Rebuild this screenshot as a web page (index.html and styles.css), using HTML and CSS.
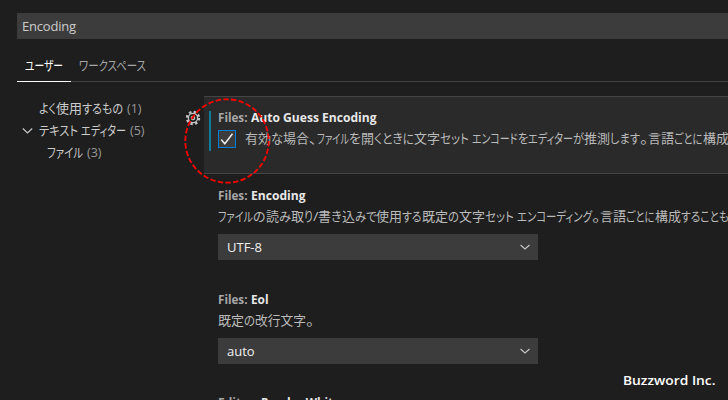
FILE: index.html
```
<!DOCTYPE html>
<html lang="ja">
<head>
<meta charset="utf-8">
<title>Settings</title>
<link rel="stylesheet" href="styles.css">
</head>
<body>
<div class="search">Encoding</div>
<div class="tabs">
  <div class="tab active"><span data-w="38">ユーザー</span></div>
  <div class="tab"><span data-w="67">ワークスペース</span></div>
</div>
<div class="main">
  <nav class="tree">
    <div class="node"><span data-w="17">よく</span><span data-w="26">使用</span><span data-w="41">するもの</span><span class="count" data-w="14.5">(1)</span></div>
    <div class="node"><svg class="twisty" width="12" height="8" viewBox="0 0 12 8"><path d="M.8 1.5L5.5 6L10.2 1.5"/></svg><span data-w="42">テキスト </span><span data-w="45">エディター</span><span class="count" data-w="14.5">(5)</span></div>
    <div class="node child"><span data-w="36">ファイル</span><span class="count" data-w="14.5">(3)</span></div>
  </nav>
  <div class="settings">
    <section class="setting focused">
      <svg class="gear" width="16" height="16" viewBox="0 0 16 16"><circle class="teeth" cx="8" cy="8" r="6"/><circle class="rim" cx="8" cy="8" r="4.6"/><circle class="hub" cx="8" cy="8" r="1.7"/></svg>
      <div class="bar"></div>
      <h3><span class="cat" data-w="32.5">Files: </span><span data-w="125.5">Auto Guess Encoding</span></h3>
      <div class="checkrow">
        <div class="check"><svg width="16" height="16" viewBox="0 0 16 16"><path d="M2.2 8.5L5.8 12.7L13.5 2.8"/></svg></div>
        <p><span data-w="26">有効</span><span data-w="12">な</span><span data-w="26">場合</span><span data-w="8">、</span><span data-w="32">ファイル</span><span data-w="12">を</span><span data-w="13">開</span><span data-w="40">くときに</span><span data-w="26">文字</span><span data-w="32">セット </span><span data-w="45.5">エンコード</span><span data-w="10.5">を</span><span data-w="45">エディター</span><span data-w="11">が</span><span data-w="26">推測</span><span data-w="30">します</span><span class="stop" data-w="8">。</span><span data-w="26">言語</span><span data-w="28.5">ごとに</span><span data-w="26">構成</span></p>
      </div>
      <svg class="ring" width="88" height="88" viewBox="0 0 88 88"><circle cx="44" cy="44" r="41.7"/></svg>
    </section>
    <section class="setting">
      <h3><span class="cat" data-w="32.5">Files: </span><span data-w="54.5">Encoding</span></h3>
      <p><span data-w="35">ファイル</span><span data-w="12.5">の</span><span data-w="13">読</span><span data-w="12">み</span><span data-w="13">取</span><span data-w="9">り</span><span data-w="5.5">/</span><span data-w="13">書</span><span data-w="10.5">き</span><span data-w="13">込</span><span data-w="21.5">みで</span><span data-w="26">使用</span><span data-w="19.5">する</span><span data-w="26">既定</span><span data-w="11">の</span><span data-w="26">文字</span><span data-w="32">セット </span><span data-w="75">エンコーディング</span><span data-w="8.5">。</span><span data-w="26">言語</span><span data-w="28.5">ごとに</span><span data-w="26">構成</span><span data-w="48">することも</span></p>
      <div class="select">UTF-8<svg width="12" height="8" viewBox="0 0 12 8"><path d="M1.5 2L6 6L10.5 2"/></svg></div>
    </section>
    <section class="setting">
      <h3><span class="cat" data-w="32.5">Files: </span><span data-w="17.5">Eol</span></h3>
      <p><span data-w="26">既定</span><span data-w="11">の</span><span data-w="51">改行文字</span><span data-w="8">。</span></p>
      <div class="select">auto<svg width="12" height="8" viewBox="0 0 12 8"><path d="M1.5 2L6 6L10.5 2"/></svg></div>
    </section>
    <section class="setting last">
      <h3><span class="cat" data-w="42.5">Editor: </span><span data-w="112">Render Whitespace</span></h3>
    </section>
  </div>
</div>
<div class="watermark"><span data-w="92.5">Buzzword Inc.</span></div>
<script src="fit.js"></script>
</body>
</html>
```
FILE: fit.js
```
// Condense each run of text to its set advance width.
document.querySelectorAll('[data-w]').forEach(function (el) {
  var target = parseFloat(el.dataset.w);
  var natural = el.getBoundingClientRect().width;
  el.style.transform = 'scaleX(' + target / natural + ')';
  el.style.marginRight = (target - natural) + 'px';
});
```
FILE: styles.css
```
* { box-sizing: border-box; }
html { overflow: hidden; }
body { margin: 0; width: 728px; height: 400px; overflow: hidden; position: relative; background: #1e1e1e; color: #ccc; font: 13px/20px "Open Sans", "Noto Sans CJK JP", sans-serif; font-feature-settings: "palt"; padding-top: 13px; white-space: nowrap; }
svg { fill: none; stroke: #c5c5c5; stroke-width: 1.2; display: block; }
p, h3 { margin: 0; font-size: 13px; height: 20px; line-height: 20px; }
p { color: #bababa; display: flex; }
h3 { display: flex; font-weight: 700; color: #e7e7e7; }
[data-w] { display: inline-block; flex: none; white-space: pre; transform-origin: 0 50%; }
.search { margin-left: 17px; height: 26px; line-height: 26px; background: #3c3c3c; padding-left: 5px; letter-spacing: -.2px; }
.tabs { display: flex; margin: 13px 0 0 17px; height: 30px; border-bottom: 1px solid #404040; }
.tab { height: 30px; padding: 0 8px; line-height: 26px; color: #a5a5a5; }
.tab.active { width: 54px; color: #fff; border-bottom: 1px solid #fff; }
.main { display: flex; height: 318px; overflow: hidden; }
.tree { width: 204px; flex: none; padding-top: 15px; }
.node { display: flex; align-items: center; height: 22px; line-height: 22px; padding-left: 39px; position: relative; }
.node.child { padding-left: 47px; }
.twisty { position: absolute; left: 22px; top: 8px; }
.node .count { position: relative; left: 3.5px; color: #999; }
.settings { width: 524px; padding-top: 14px; }
.setting { height: 104px; padding: 11px 0 0 14px; position: relative; }
.setting.focused { height: 78px; padding-top: 10px; background: #2a2a2a; border: solid #444; border-width: 1px 0; }
.setting p { margin-top: 1px; }
.setting.last { padding-top: 10px; }
.cat { color: #a8a8a8; }
.bar { position: absolute; left: 5px; top: 14px; width: 2px; height: 40px; background: #0c7d9d; }
.gear { position: absolute; left: -19px; top: 13px; }
.gear .teeth { stroke-width: 2.4; stroke-dasharray: 2.4 2.312; }
.gear .rim { stroke-width: 1.3; }
.gear .hub { stroke-width: 1.2; }
.checkrow { display: flex; align-items: center; height: 20px; gap: 9px; margin-top: 1px; }
.setting .checkrow p { margin-top: 0; }
.check { width: 18px; height: 18px; border: 1px solid #007fd4; background: #3c3c3c; flex: none; margin-top: 2px; }
.check svg { stroke: #eee; stroke-width: 1.5; }
.ring { position: absolute; left: -21.5px; top: 0; z-index: 2; }
.ring circle { stroke: #f00; stroke-width: 1.8; stroke-dasharray: 5.4 2.3; }
.select { width: 320px; height: 26px; line-height: 26px; margin-top: 8px; padding: 0 7px 0 9px; background: #3c3c3c; color: #f0f0f0; display: flex; justify-content: space-between; align-items: center; }
.watermark { position: absolute; left: 623px; top: 370px; color: #fff; font-weight: 600; font-size: 13px; }
```
